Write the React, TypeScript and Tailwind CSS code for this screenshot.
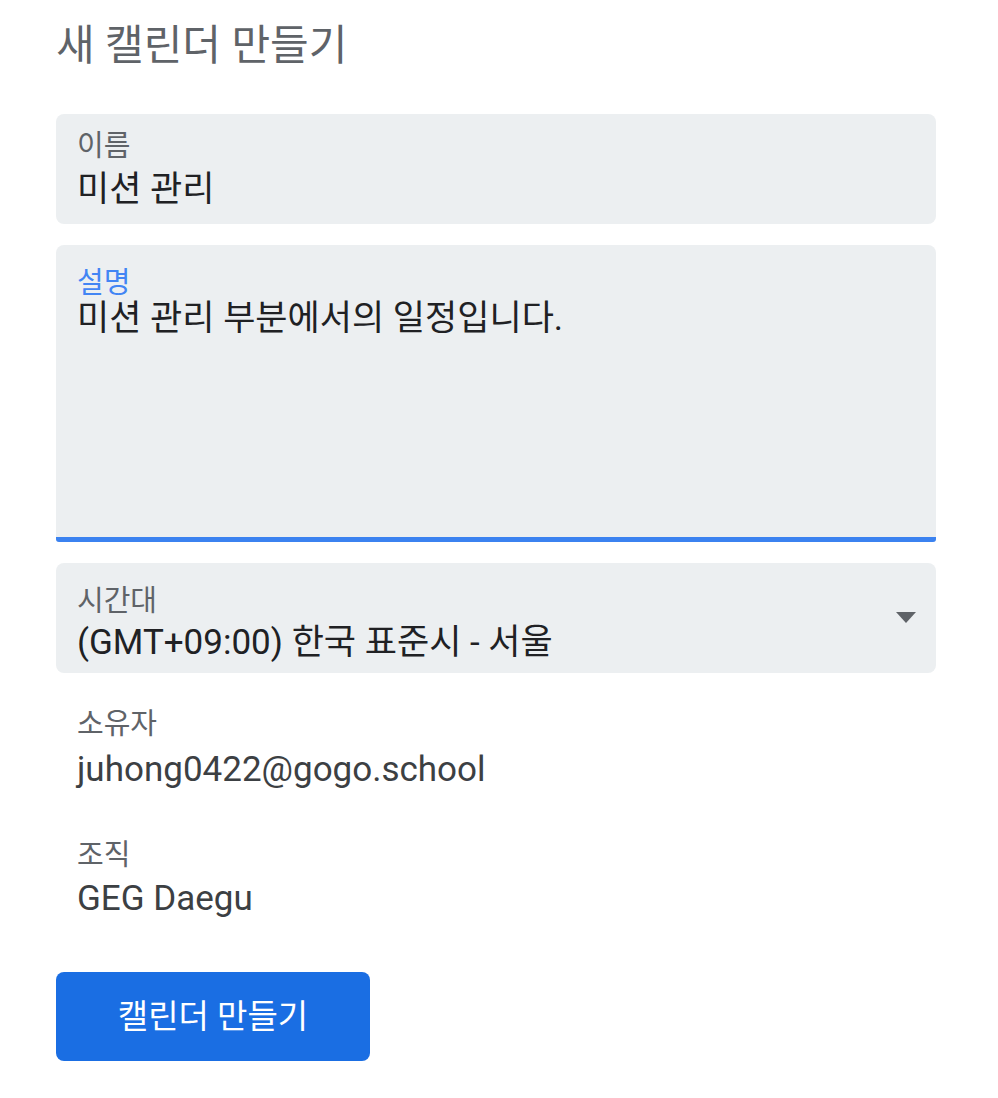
const font = {
  fontFamily: '"Roboto", "Noto Sans CJK KR", sans-serif',
};

function Field({ label, value }: { label: string; value: string }) {
  return (
    <div className="flex h-[110px] flex-col rounded-lg bg-[#eceff1] px-[21px] pt-[14px]">
      <span className="text-[29px] leading-[36px] text-[#5f6368]">{label}</span>
      <span className="text-[35px] leading-[52px] text-[#202124]">{value}</span>
    </div>
  );
}

export default function App() {
  return (
    <div className="min-h-[1098px] w-[998px] bg-white px-[56px] pt-[16px]" style={font}>
      <h1 className="text-[42px] leading-[60px] font-normal text-[#5f6368]">새 캘린더 만들기</h1>

      <div className="mt-[38px] flex w-[880px] flex-col gap-[21px]">
        <Field label="이름" value="미션 관리" />

        <div className="flex h-[297px] flex-col overflow-hidden rounded-t-lg rounded-b-[3px] bg-[#eceff1]">
          <div className="flex flex-1 flex-col px-[21px] pt-[23px]">
            <span className="text-[29px] leading-[31px] text-[#4285f4]">설명</span>
            <span className="text-[35px] leading-[40px] text-[#202124]">미션 관리 부분에서의 일정입니다.</span>
          </div>
          <div className="h-[5px] bg-[#3b82f0]" />
        </div>

        <div className="relative flex h-[110px] flex-col rounded-lg bg-[#eceff1] px-[21px] pt-[20px]">
          <span className="text-[29px] leading-[36px] text-[#5f6368]">시간대</span>
          <span className="text-[35px] leading-[48px] text-[#202124]">(GMT+09:00) 한국 표준시 - 서울</span>
          <svg className="absolute right-[20px] top-[49px]" width="20" height="12" viewBox="0 0 20 12">
            <path d="M0 0 L20 0 L10 11 Z" fill="#5f6368" />
          </svg>
        </div>
      </div>

      <div className="mt-[33px] flex flex-col px-[21px]">
        <span className="text-[29px] leading-[36px] text-[#5f6368]">소유자</span>
        <span className="text-[35px] leading-[56px] text-[#3c4043]">juhong0422@gogo.school</span>
      </div>

      <div className="mt-[39px] flex flex-col px-[21px]">
        <span className="text-[29px] leading-[36px] text-[#5f6368]">조직</span>
        <span className="text-[35px] leading-[52px] text-[#3c4043]">GEG Daegu</span>
      </div>

      <button className="mt-[47px] flex h-[89px] w-[314px] items-center justify-center rounded-lg bg-[#1a6ee3] text-[33px] text-white">
        캘린더 만들기
      </button>
    </div>
  );
}
